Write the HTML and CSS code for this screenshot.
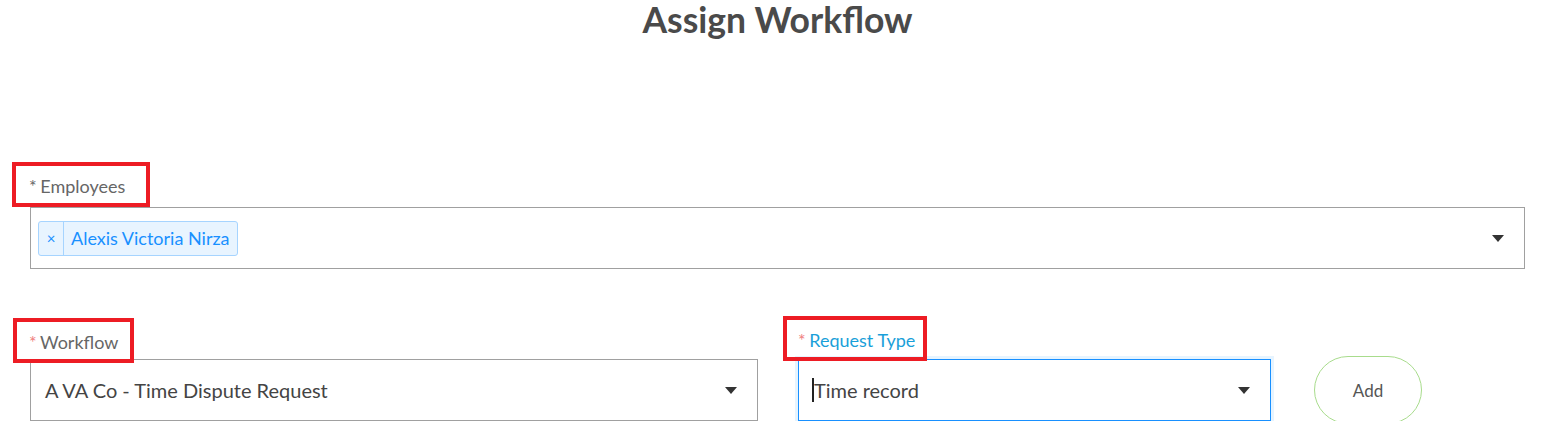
FILE: index.html
```html
<!DOCTYPE html>
<html lang="en">
<head>
<meta charset="utf-8">
<title>Assign Workflow</title>
<link rel="stylesheet" href="styles.css">
</head>
<body>
<div class="page">
  <h1 class="title">Assign Workflow</h1>

  <div class="field field-employees">
    <div class="label-box"><span class="star star-gray">*</span> Employees</div>
    <div class="select select-multi">
      <div class="tag">
        <span class="tag-close">×</span>
        <span class="tag-text">Alexis Victoria Nirza</span>
      </div>
      <span class="caret"></span>
    </div>
  </div>

  <div class="row">
    <div class="field field-workflow">
      <div class="label-box"><span class="star">*</span> Workflow</div>
      <div class="select select-single">
        <span class="value">A VA Co - Time Dispute Request</span>
        <span class="caret"></span>
      </div>
    </div>
    <div class="field field-request">
      <div class="label-box label-active"><span class="star">*</span> Request Type</div>
      <div class="select select-single select-focus">
        <span class="value"><span class="cursor"></span>Time record</span>
        <span class="caret"></span>
      </div>
    </div>
    <button class="btn-add" type="button">Add</button>
  </div>
</div>
</body>
</html>
```

FILE: styles.css
```css
html, body {
  margin: 0;
  padding: 0;
  background: #ffffff;
}

body {
  font-family: Lato, "Liberation Sans", sans-serif;
  color: #444;
}

.page {
  width: 1495px;
  padding: 0 35px 0 30px;
}

.title {
  margin: 0;
  text-align: center;
  font-size: 35.5px;
  line-height: 40px;
  font-weight: 700;
  color: #4a4a4a;
}

.field {
  display: flex;
  flex-direction: column;
  align-items: flex-start;
}

.field-employees {
  margin-top: 122px;
}

.label-box {
  position: relative;
  z-index: 2;
  margin-left: -18px;
  border: 4px solid #ed1c24;
  padding: 9px 21px 6px 13px;
  font-size: 18px;
  line-height: 22px;
  color: #666;
  white-space: nowrap;
}

.field-workflow .label-box {
  margin-left: -17px;
  padding-left: 12px;
  padding-right: 12px;
}

.star {
  color: #f08080;
  margin-right: -1px;
}

.star-gray {
  color: #666;
}

.label-active {
  color: #1a9fd9;
}

.select {
  position: relative;
  box-sizing: border-box;
  width: 100%;
  height: 62px;
  border: 1px solid #a0a0a0;
  display: flex;
  align-items: center;
  background: #fff;
}

.select-multi {
  padding-left: 7px;
}

.select-single {
  padding-left: 14px;
  margin-top: -4px;
}

.tag {
  display: flex;
  align-items: stretch;
  height: 35px;
  box-sizing: border-box;
  border: 1px solid #a6d4ff;
  background: #e8f4ff;
  border-radius: 3px;
  color: #1890ff;
}

.tag-close {
  width: 24px;
  display: flex;
  align-items: center;
  justify-content: center;
  font-size: 15px;
  border-right: 1px solid #a6d4ff;
}

.tag-text {
  display: flex;
  align-items: center;
  padding: 0 7px 0 7px;
  font-size: 18px;
}

.value {
  font-size: 20px;
  color: #444;
  display: flex;
  align-items: center;
}

.caret {
  position: absolute;
  right: 20px;
  top: 50%;
  margin-top: -3px;
  width: 0;
  height: 0;
  border-left: 6px solid transparent;
  border-right: 6px solid transparent;
  border-top: 7px solid #333;
}

.row {
  display: flex;
  align-items: flex-end;
  margin-top: 47px;
}

.field-workflow {
  width: 728px;
}

.field-request {
  width: 473px;
  margin-left: 40px;
}

.field-request .label-box {
  margin-left: -15px;
  margin-bottom: 2px;
  padding-left: 11px;
  padding-right: 8px;
}

.select-focus {
  border-color: #1890ff;
  box-shadow: 0 0 0 3px #e6f4ff;
  padding-left: 15px;
}

.cursor {
  display: inline-block;
  width: 2px;
  height: 24px;
  background: #222;
  margin-left: -2px;
}

.btn-add {
  width: 108px;
  height: 68px;
  margin-left: 43px;
  margin-bottom: -3px;
  border: 1px solid #a8dc8c;
  border-radius: 34px;
  background: #fff;
  font-family: Lato, "Liberation Sans", sans-serif;
  font-size: 17px;
  color: #555;
  cursor: pointer;
}
```
